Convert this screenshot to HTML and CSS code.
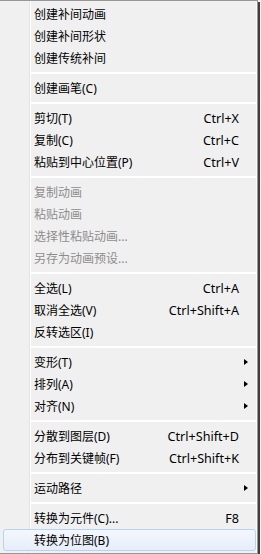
FILE: index.html
```html
<!DOCTYPE html>
<html>
<head>
    <title>Context Menu</title>
    <link rel="stylesheet" href="styles.css">
</head>
<body>
    <div class="menu">
        <div class="item"><span class="label">创建补间动画</span></div>
        <div class="item"><span class="label">创建补间形状</span></div>
        <div class="item"><span class="label">创建传统补间</span></div>
        <div class="sep"></div>
        <div class="item"><span class="label">创建画笔(C)</span></div>
        <div class="sep"></div>
        <div class="item"><span class="label">剪切(T)</span><span class="key">Ctrl+X</span></div>
        <div class="item"><span class="label">复制(C)</span><span class="key">Ctrl+C</span></div>
        <div class="item"><span class="label">粘贴到中心位置(P)</span><span class="key">Ctrl+V</span></div>
        <div class="sep"></div>
        <div class="item disabled"><span class="label">复制动画</span></div>
        <div class="item disabled"><span class="label">粘贴动画</span></div>
        <div class="item disabled"><span class="label">选择性粘贴动画...</span></div>
        <div class="item disabled"><span class="label">另存为动画预设...</span></div>
        <div class="sep"></div>
        <div class="item"><span class="label">全选(L)</span><span class="key">Ctrl+A</span></div>
        <div class="item"><span class="label">取消全选(V)</span><span class="key">Ctrl+Shift+A</span></div>
        <div class="item"><span class="label">反转选区(I)</span></div>
        <div class="sep"></div>
        <div class="item"><span class="label">变形(T)</span><span class="arrow"></span></div>
        <div class="item"><span class="label">排列(A)</span><span class="arrow"></span></div>
        <div class="item"><span class="label">对齐(N)</span><span class="arrow"></span></div>
        <div class="sep"></div>
        <div class="item"><span class="label">分散到图层(D)</span><span class="key">Ctrl+Shift+D</span></div>
        <div class="item"><span class="label">分布到关键帧(F)</span><span class="key">Ctrl+Shift+K</span></div>
        <div class="sep"></div>
        <div class="item"><span class="label">运动路径</span><span class="arrow"></span></div>
        <div class="sep"></div>
        <div class="item"><span class="label">转换为元件(C)...</span><span class="key">F8</span></div>
        <div class="item active"><span class="label">转换为位图(B)</span></div>
    </div>
</body>
</html>
```

FILE: styles.css
```css
body {
    margin: 0;
    background-color: #f0f0f0;
    font-family: "Noto Sans", "Noto Sans CJK SC", sans-serif;
    font-size: 12px;
    color: #000;
}

.menu {
    width: 257px;
    height: 550px;
    padding-top: 2px;
    border-top: 1px solid #979797;
    border-right: 1px solid #979797;
    border-bottom: 1px solid #979797;
    background: linear-gradient(to right, #f0f0f0 29px, #e2e3e3 29px, #e2e3e3 30px, #fff 30px, #fff 31px, #f0f0f0 31px);
    box-shadow: inset -1px 0 0 #fbfbfb, 2px 2px 0 #3f3f3f;
}

.item {
    display: flex;
    align-items: center;
    height: 22px;
    padding-left: 34px;
    padding-right: 18px;
    white-space: nowrap;
}

.item .label {
    flex: 1;
}

.key {
    font-family: "Noto Sans", sans-serif;
    font-size: 12.6px;
}

.arrow {
    width: 0;
    height: 0;
    margin-right: -9px;
    border-left: 4px solid #000;
    border-top: 3.5px solid transparent;
    border-bottom: 3.5px solid transparent;
}

.disabled {
    color: #8d8d8d;
}

.sep {
    height: 2px;
    margin-left: 30px;
    padding: 3px 0;
    background-clip: content-box;
    background-image: linear-gradient(#e0e0e0 1px, #fff 1px);
}

.active {
    height: 22px;
    box-sizing: border-box;
    margin: 0 1px 0 3px;
    padding-left: 30px;
    border: 1px solid #b5d3f3;
    border-radius: 3px;
    background: linear-gradient(#f4f8fd, #e6eefa);
}
```
